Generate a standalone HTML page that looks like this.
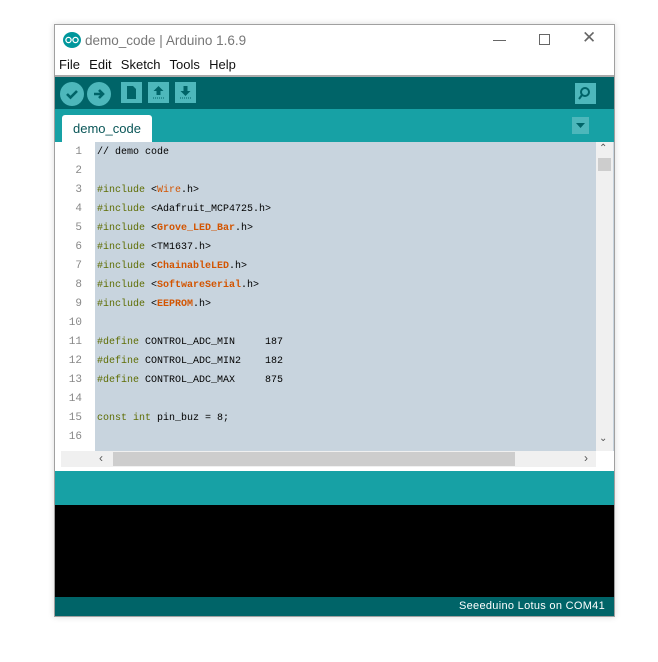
<!DOCTYPE html>
<html><head><style>
body{margin:0;width:658px;height:662px;background:#fff;position:relative;overflow:hidden;font-family:"Liberation Sans",sans-serif}
.win{position:absolute;left:54px;top:24px;width:559px;height:591px;border:1px solid #a0a0a0;background:#fff;box-shadow:0 0 6px rgba(0,0,0,.15)}
.abs{position:absolute}
.title{left:30px;top:8px;font-size:13.5px;color:#777}
.menu{left:4px;top:32px;font-size:13px;color:#111;word-spacing:1px}
.tb{left:0;top:52px;width:559px;height:32px;background:#006468}
.tabbar{left:0;top:84px;width:559px;height:33px;background:#17a1a5}
.tab{left:7px;top:90px;width:90px;height:27px;background:#fff;border-radius:3px 3px 0 0;font-size:13px;color:#0a5658;text-align:center;line-height:27px}
.ed{left:0;top:117px;width:559px;height:309px;background:#c8d4de}
.gut{left:0;top:117px;width:40px;height:309px;background:#fff}
.ln{position:absolute;left:0;width:27px;text-align:right;font-family:"Liberation Mono",monospace;font-size:11px;color:#888}
.code{position:absolute;left:42px;font-family:"Liberation Mono",monospace;font-size:10px;color:#000;white-space:pre}
.k{color:#5e6d03}.o{color:#d35400;font-weight:bold}.w{color:#d35400}
.btn{position:absolute;top:57px;width:24px;height:24px;border-radius:50%;background:#4db7bb}
.sq{position:absolute;top:57px;width:21px;height:21px;background:#4db7bb}
</style></head><body>
<div class="win">
<svg class="abs" style="left:8px;top:7px" width="18" height="16"><ellipse cx="9" cy="8" rx="9" ry="8" fill="#00979c"/><circle cx="5.5" cy="8" r="2.6" fill="none" stroke="#fff" stroke-width="1.3"/><circle cx="12.5" cy="8" r="2.6" fill="none" stroke="#fff" stroke-width="1.3"/></svg>
<div class="abs title">demo_code | Arduino 1.6.9</div>
<div class="abs" style="left:438px;top:15px;width:13px;height:1px;background:#666"></div>
<div class="abs" style="left:484px;top:9px;width:9px;height:9px;border:1px solid #666"></div>
<div class="abs" style="left:527px;top:3px;font-size:17px;color:#666">✕</div>
<div class="abs menu">File&nbsp; Edit&nbsp; Sketch&nbsp; Tools&nbsp; Help</div>
<div class="abs" style="left:0;top:50px;width:559px;height:2px;background:#aaa"></div>
<div class="abs tb"></div>
<div class="btn" style="left:5px"><svg width="24" height="24"><path d="M7 12l3.5 3.5L17 9" stroke="#006468" stroke-width="2.6" fill="none"/></svg></div>
<div class="btn" style="left:32px"><svg width="24" height="24"><path d="M7 12h8M12 8l4 4-4 4" stroke="#006468" stroke-width="2.6" fill="none"/></svg></div>
<div class="sq" style="left:66px"><svg width="21" height="21"><path d="M6 4h6l3 3v10H6z" fill="#006468"/></svg></div>
<div class="sq" style="left:93px"><svg width="21" height="21"><path d="M10.5 4l5 5h-3v4h-4v-4h-3z" fill="#006468"/><path d="M5 16h11" stroke="#006468" stroke-dasharray="1 1"/></svg></div>
<div class="sq" style="left:120px"><svg width="21" height="21"><path d="M10.5 14l5-5h-3V4h-4v5h-3z" fill="#006468"/><path d="M5 16h11" stroke="#006468" stroke-dasharray="1 1"/></svg></div>
<div class="sq" style="left:520px;top:58px"><svg width="21" height="21"><circle cx="10" cy="9" r="4" fill="none" stroke="#006468" stroke-width="2"/><path d="M7 12l-3 4" stroke="#006468" stroke-width="2"/></svg></div>
<div class="abs tabbar"></div>
<div class="abs tab">demo_code</div>
<div class="abs" style="left:517px;top:92px;width:17px;height:17px;background:#4db7bb"><svg width="17" height="17"><path d="M4 6h9l-4.5 5z" fill="#006468"/></svg></div>
<div class="abs ed"></div>
<div class="abs gut"></div>
<div class="abs" style="left:541px;top:117px;width:17px;height:309px;background:#f0f0f0"></div>
<div class="abs" style="left:543px;top:133px;width:13px;height:13px;background:#cdcdcd"></div>
<div class="abs" style="left:544px;top:118px;font-size:10px;color:#555">⌃</div>
<div class="abs" style="left:544px;top:408px;font-size:10px;color:#555">⌄</div>
<div class="abs" style="left:6px;top:426px;width:535px;height:16px;background:#f0f0f0"></div>
<div class="abs" style="left:58px;top:427px;width:402px;height:14px;background:#cdcdcd"></div>
<div class="abs" style="left:44px;top:426px;font-size:12px;color:#555">‹</div>
<div class="abs" style="left:529px;top:426px;font-size:12px;color:#555">›</div>
<div class="abs" style="left:0;top:446px;width:559px;height:34px;background:#17a1a5"></div>
<div class="abs" style="left:0;top:480px;width:559px;height:92px;background:#000"></div>
<div class="abs" style="left:0;top:572px;width:559px;height:19px;background:#006468;"></div>
<div class="abs" style="left:404px;top:575px;font-size:11px;color:#fff;letter-spacing:.3px">Seeeduino Lotus on COM41</div>
<div class="abs" style="left:0;top:121px;width:559px">
<div class="ln" style="top:0">1</div><div class="code" style="top:1px">// demo code</div>
<div class="ln" style="top:19px">2</div>
<div class="ln" style="top:38px">3</div><div class="code" style="top:39px"><span class="k">#include</span> &lt;<span class="w">Wire</span>.h&gt;</div>
<div class="ln" style="top:57px">4</div><div class="code" style="top:58px"><span class="k">#include</span> &lt;Adafruit_MCP4725.h&gt;</div>
<div class="ln" style="top:76px">5</div><div class="code" style="top:77px"><span class="k">#include</span> &lt;<span class="o">Grove_LED_Bar</span>.h&gt;</div>
<div class="ln" style="top:95px">6</div><div class="code" style="top:96px"><span class="k">#include</span> &lt;TM1637.h&gt;</div>
<div class="ln" style="top:114px">7</div><div class="code" style="top:115px"><span class="k">#include</span> &lt;<span class="o">ChainableLED</span>.h&gt;</div>
<div class="ln" style="top:133px">8</div><div class="code" style="top:134px"><span class="k">#include</span> &lt;<span class="o">SoftwareSerial</span>.h&gt;</div>
<div class="ln" style="top:152px">9</div><div class="code" style="top:153px"><span class="k">#include</span> &lt;<span class="o">EEPROM</span>.h&gt;</div>
<div class="ln" style="top:171px">10</div>
<div class="ln" style="top:190px">11</div><div class="code" style="top:191px"><span class="k">#define</span> CONTROL_ADC_MIN     187</div>
<div class="ln" style="top:209px">12</div><div class="code" style="top:210px"><span class="k">#define</span> CONTROL_ADC_MIN2    182</div>
<div class="ln" style="top:228px">13</div><div class="code" style="top:229px"><span class="k">#define</span> CONTROL_ADC_MAX     875</div>
<div class="ln" style="top:247px">14</div>
<div class="ln" style="top:266px">15</div><div class="code" style="top:267px"><span class="k">const int</span> pin_buz = 8;</div>
<div class="ln" style="top:285px">16</div>
</div>
</div>
</body></html>
